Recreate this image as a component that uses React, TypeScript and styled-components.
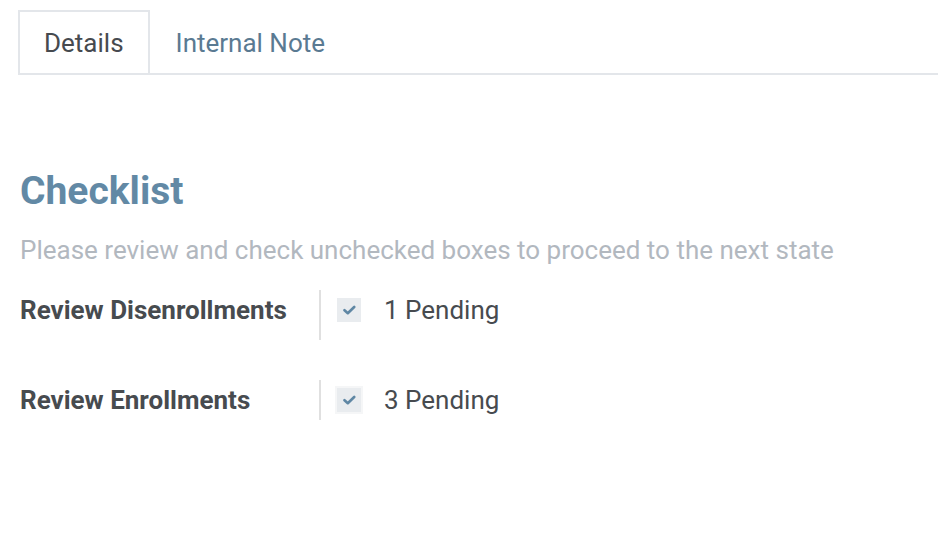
import React from "react";
import styled, { createGlobalStyle } from "styled-components";

const Global = createGlobalStyle`
  html, body { margin: 0; padding: 0; background: #fff; }
  body { font-family: Roboto, "Noto Sans", sans-serif; }
  * { box-sizing: border-box; }
`;

const Page = styled.div`
  padding: 10px 0 0 18px;
`;

const Tabs = styled.div`
  display: flex;
  border-bottom: 2px solid #e3e6ea;
`;

const Tab = styled.div<{ $active?: boolean }>`
  height: 65px;
  display: flex;
  align-items: center;
  padding: 0 24px 2px;
  font-size: 26px;
  color: ${(p) => (p.$active ? "#464a4f" : "#5a7a92")};
  border: 2px solid ${(p) => (p.$active ? "#e3e6ea" : "transparent")};
  border-bottom: none;
  margin-bottom: -2px;
`;

const Section = styled.div`
  padding: 94px 0 0 2px;
`;

const Heading = styled.h2`
  margin: 0;
  font-size: 39px;
  font-weight: 700;
  color: #6289a5;
  line-height: 44px;
`;

const Hint = styled.p`
  margin: 22px 0 0;
  font-size: 26px;
  color: #b2b8bf;
  line-height: 30px;
`;

const List = styled.div`
  display: flex;
  flex-direction: column;
  gap: 50px;
  margin-top: 25px;
`;

const Row = styled.div`
  display: flex;
  align-items: center;
  height: 40px;
`;

const Label = styled.div`
  width: 299px;
  font-size: 26px;
  font-weight: 700;
  color: #474b4f;
`;

const Divider = styled.div`
  width: 2px;
  height: 50px;
  align-self: flex-start;
  background: #e0e0e0;
  margin-right: 16px;
`;

const Box = styled.div<{ $focus?: boolean }>`
  width: 24px;
  height: 24px;
  background: #e9ecef;
  display: flex;
  align-items: center;
  justify-content: center;
  box-shadow: ${(p) => (p.$focus ? "0 0 0 2px #f5f6f7" : "none")};
  margin-right: 23px;
`;

const Value = styled.div`
  font-size: 26px;
  color: #474b4f;
`;

const Check = () => (
  <svg width="13" height="10" viewBox="0 0 13 10">
    <path d="M1.5 5.2 L4.8 8.2 L11.2 2" fill="none" stroke="#5f87a4" strokeWidth="2.6" strokeLinecap="round" strokeLinejoin="round" />
  </svg>
);

const items = [
  { label: "Review Disenrollments", value: "1 Pending", focus: false },
  { label: "Review Enrollments", value: "3 Pending", focus: true },
];

export default function App() {
  return (
    <Page>
      <Global />
      <Tabs>
        <Tab $active>Details</Tab>
        <Tab>Internal Note</Tab>
      </Tabs>
      <Section>
        <Heading>Checklist</Heading>
        <Hint>Please review and check unchecked boxes to proceed to the next state</Hint>
        <List>
          {items.map((it) => (
            <Row key={it.label}>
              <Label>{it.label}</Label>
              <Divider />
              <Box $focus={it.focus}>
                <Check />
              </Box>
              <Value>{it.value}</Value>
            </Row>
          ))}
        </List>
      </Section>
    </Page>
  );
}
